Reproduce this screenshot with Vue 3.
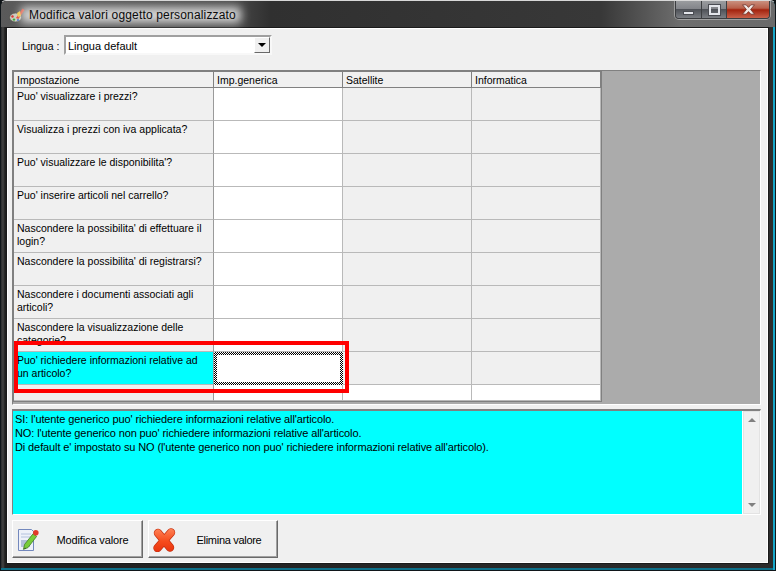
<script setup>
const columns = ['Impostazione', 'Imp.generica', 'Satellite', 'Informatica']
const rows = [
  "Puo' visualizzare i prezzi?",
  'Visualizza i prezzi con iva applicata?',
  "Puo' visualizzare le disponibilita'?",
  "Puo' inserire articoli nel carrello?",
  "Nascondere la possibilita' di effettuare il login?",
  "Nascondere la possibilita' di registrarsi?",
  'Nascondere i documenti associati agli articoli?',
  'Nascondere la visualizzazione delle categorie?',
  "Puo' richiedere informazioni relative ad un articolo?",
]
const notes = [
  "SI: l'utente generico puo' richiedere informazioni relative all'articolo.",
  "NO: l'utente generico non puo' richiedere informazioni relative all'articolo.",
  "Di default e' impostato su NO (l'utente generico non puo' richiedere informazioni relative all'articolo).",
]
</script>

<template>
  <div class="window">
    <header class="titlebar">
      <svg class="app-icon" width="17" height="16" viewBox="0 0 17 16">
        <ellipse cx="6.5" cy="10.5" rx="6" ry="4.5" fill="#c9c9bc" stroke="#4d4d48" stroke-width=".8" />
        <circle cx="3.5" cy="9.5" r="1.2" fill="#d33" />
        <circle cx="5" cy="12.6" r="1.2" fill="#3a3" />
        <circle cx="9" cy="13" r="1.1" fill="#36c" />
        <path d="M7 11 L13.5 1.5 L15.5 3 L9.5 12 Z" fill="#e23b22" />
        <path d="M8 6 L11 4 L12 9 L9 10 Z" fill="#f2c230" />
      </svg>
      <span class="title">Modifica valori oggetto personalizzato</span>
      <div class="caption-buttons">
        <span class="cap cap-min"><i></i></span>
        <span class="cap cap-max"><i></i></span>
        <span class="cap cap-close">
          <svg width="15" height="11" viewBox="0 0 15 11">
            <path d="M1.5 .8h3.6l2.4 2.6L9.9.8h3.6L9.6 5.5l3.9 4.7H9.9L7.5 7.6l-2.4 2.6H1.5l3.9-4.7z" fill="#f1e9e6" stroke="#6d3128" stroke-width=".8" />
          </svg>
        </span>
      </div>
    </header>

    <main class="client">
      <div class="lang-row">
        <label>Lingua :</label>
        <div class="combo">
          <span class="combo-text">Lingua default</span>
          <span class="combo-btn"><b></b></span>
        </div>
      </div>

      <section class="grid-panel">
        <div class="grid">
          <div class="row head">
            <div v-for="c in columns" :key="c" class="cell">{{ c }}</div>
          </div>
          <div v-for="(r, i) in rows" :key="r" class="row body" :class="{ active: i === 8 }">
            <div class="cell label"><span>{{ r }}</span></div>
            <div class="cell white" :class="{ focus: i === 8 }"></div>
            <div class="cell fixed"></div>
            <div class="cell fixed"></div>
          </div>
          <div class="row tail">
            <div class="cell tail-first"></div>
            <div class="cell white"></div>
            <div class="cell white"></div>
            <div class="cell white"></div>
          </div>
        </div>
        <div class="highlight"></div>
      </section>

      <section class="notes">
        <div class="notes-text">
          <p v-for="n in notes" :key="n">{{ n }}</p>
        </div>
        <div class="scrollbar">
          <i class="up"></i>
          <i class="down"></i>
        </div>
      </section>

      <footer class="actions">
        <button class="btn btn-edit">
          <svg width="24" height="24" viewBox="0 0 24 24">
            <path d="M2.5 1.5h13l2 2v19h-15z" fill="#eef1f9" stroke="#7388bd" />
            <path d="M5 12h9v7H5z" fill="#b4c0dc" />
            <path d="M5 6h10M5 9h10" stroke="#b4c2de" />
            <path d="M8.6 16.4l-1.2 5 4.6-1.8L20.6 8.4l-3.4-2.8z" fill="#78cc3a" stroke="#3f7d20" stroke-width=".8" />
            <path d="M9 19.5l-.8 1.6 1.8-.7z" fill="#333" />
            <circle cx="19.8" cy="4.8" r="2.8" fill="#e23a2a" />
          </svg>
          <span>Modifica valore</span>
        </button>
        <button class="btn btn-delete">
          <svg width="24" height="24" viewBox="0 0 24 24">
            <defs>
              <linearGradient id="xfill" gradientUnits="userSpaceOnUse" x1="0" y1="0" x2="0" y2="24">
                <stop offset="0" stop-color="#ff8458" />
                <stop offset=".55" stop-color="#f64c1c" />
                <stop offset="1" stop-color="#e8330e" />
              </linearGradient>
            </defs>
            <path d="M6 5 L18 19.5 M19 4.5 L5.5 20" stroke="#c42f10" stroke-width="8.4" stroke-linecap="round" fill="none" />
            <path d="M6 5 L18 19.5 M19 4.5 L5.5 20" stroke="url(#xfill)" stroke-width="7" stroke-linecap="round" fill="none" />
          </svg>
          <span>Elimina valore</span>
        </button>
      </footer>
    </main>
  </div>
</template>

<style>
html, body { margin: 0; background: #0d1215; }
</style>

<style scoped>
.window {
  width: 776px;
  height: 571px;
  box-sizing: border-box;
  padding: 0 6px 6px 5px;
  display: flex;
  flex-direction: column;
  overflow: hidden;
  font: 11px "Liberation Sans", Arial, sans-serif;
  color: #000;
  border: 1px solid #10161a;
  border-top-color: #d8d8d8;
  border-radius: 6px 6px 0 0;
  background: linear-gradient(90deg, #2a2b2d 0, #444 2px, #1f1f1f 4px, #2c2c2c 100%);
  box-shadow: inset -2px 0 0 #17a6c8, inset 0 -2px 0 #0d6f88;
}
.titlebar {
  height: 26px;
  flex: none;
  display: flex;
  align-items: center;
  position: relative;
  background: linear-gradient(90deg, #5a5a5a 0, #4a4a4a 230px, #303030 270px, #383838 600px, #6e6e6e 680px, #6a6a6a 100%);
  margin: 0 -6px 0 -5px;
  padding-left: 8px;
}
.app-icon { margin-right: 3px; flex: none; margin-top: 2px; }
.title {
  position: relative;
  isolation: isolate;
  font: 12px "Liberation Sans", Arial, sans-serif;
  letter-spacing: .16px;
  color: #0b0b0b;
  margin-top: 2px;
}
.title::before {
  content: "";
  position: absolute;
  inset: -1px -5px -1px -8px;
  background: rgba(232, 232, 232, .88);
  filter: blur(5px);
  z-index: -1;
}
.caption-buttons {
  position: absolute;
  top: 0;
  right: 5px;
  display: flex;
  height: 17px;
  border: 1px solid #3b3d40;
  border-top: 0;
  border-radius: 0 0 4px 4px;
  overflow: hidden;
  box-shadow: 0 0 0 1px rgba(255,255,255,.35);
}
.cap {
  height: 17px;
  display: flex;
  align-items: center;
  justify-content: center;
  box-sizing: border-box;
  background: linear-gradient(#9a9c9f 0, #83858a 45%, #4f5258 50%, #7b7e83 100%);
  border-right: 1px solid #3d3f42;
}
.cap-min { width: 26px; }
.cap-min i { width: 11px; height: 4px; margin-top: 6px; background: #e3e5ea; border: 1px solid #4a4c52; box-sizing: border-box; }
.cap-max { width: 25px; }
.cap-max i { width: 11px; height: 10px; border: 2px solid #e3e5ea; box-sizing: border-box; outline: 1px solid #4a4c52; }
.cap-close {
  width: 42px;
  border-right: 0;
  background: linear-gradient(#c9907f 0, #b8604a 42%, #a3230e 52%, #c8614a 100%);
}
.client {
  flex: 1;
  box-sizing: border-box;
  background: #f0f0f0;
  border: 1px solid #1a1a1a;
  box-shadow: inset 0 0 0 1px #fff;
  padding: 5px 7px 0 5px;
  display: flex;
  flex-direction: column;
}
.lang-row {
  display: flex;
  align-items: center;
  height: 24px;
  padding-left: 10px;
}
.lang-row label { font-size: 10.5px; width: 42px; flex: none; padding-top: 2px; }
.combo-text { padding-top: 1px; }
.combo {
  width: 208px;
  height: 20px;
  box-sizing: border-box;
  background: #fff;
  border: 2px solid;
  border-color: #a0a0a0 #f8f8f8 #f8f8f8 #a0a0a0;
  display: flex;
  align-items: center;
  justify-content: space-between;
  padding-left: 2px;
}
.combo-btn {
  width: 16px;
  height: 16px;
  box-sizing: border-box;
  background: #f0f0f0;
  border: 1px solid;
  border-color: #fff #696969 #696969 #fff;
  display: flex;
  align-items: center;
  justify-content: center;
}
.combo-btn b {
  border: 4px solid transparent;
  border-top-color: #000;
  border-bottom: 0;
}
.grid-panel {
  margin-top: 13px;
  height: 335px;
  flex: none;
  box-sizing: border-box;
  position: relative;
  background: #ababab;
  border: 1px solid;
  border-color: #808080 #fff #fff #808080;
}
.grid {
  width: 589px;
  height: 331px;
  box-sizing: border-box;
  border: 1px solid #808080;
  background: #fff;
  display: flex;
  flex-direction: column;
  font-size: 10.5px;
}
.row {
  display: grid;
  grid-template-columns: 200px 129px 129px 129px;
}
.cell {
  box-sizing: border-box;
  border-right: 1px solid #b9b9b9;
  border-bottom: 1px solid #b9b9b9;
  padding: 1px 3px 0;
  line-height: 14px;
  overflow: hidden;
  background: #f0f0f0;
}
.cell:first-child { border-right-color: #9a9a9a; }
.head { height: 16px; flex: none; }
.head .cell { border-bottom-color: #808080; border-right-color: #808080; }
.body { height: 33px; flex: none; }
.label { padding: 2px 3px 0; line-height: 13px; }
.white { background: #fff; }
.active .label { background: #0ff; }
.focus {
  position: relative;
  background: repeating-conic-gradient(#000 0 25%, #fff 0 50%) 0 0 / 2px 2px;
  border: 0;
}
.focus::after {
  content: "";
  position: absolute;
  inset: 3px;
  background: #fff;
}
.tail { flex: 1; }
.tail-first { background: #f0f0f0; }
.highlight {
  position: absolute;
  left: 1px;
  top: 270px;
  width: 335px;
  height: 52px;
  box-sizing: border-box;
  border: 4px solid #f00;
  pointer-events: none;
}
.notes {
  margin-top: 4px;
  height: 106px;
  flex: none;
  box-sizing: border-box;
  display: flex;
  border: 1px solid;
  border-color: #808080 #fff #fff #808080;
  border-top-width: 2px;
}
.notes-text {
  flex: 1;
  background: #0ff;
  padding: 1px 2px;
  line-height: 14px;
  letter-spacing: -.11px;
}
.notes-text p { margin: 0; }
.scrollbar {
  width: 18px;
  flex: none;
  background: #f0f0f0;
  border-left: 1px solid #fff;
  box-shadow: inset 0 0 0 1px #e3e3e3;
  display: flex;
  flex-direction: column;
  justify-content: space-between;
  align-items: center;
  padding: 7px 0;
  box-sizing: border-box;
}
.scrollbar i {
  border: 4px solid transparent;
}
.scrollbar .up { border-top: 0; border-bottom-color: #808080; }
.scrollbar .down { border-bottom: 0; border-top-color: #808080; }
.actions {
  display: flex;
  gap: 5px;
  margin-top: 5px;
}
.btn {
  height: 38px;
  box-sizing: border-box;
  width: 130px;
  background: #f0f0f0;
  border: 1px solid;
  border-color: #fff #696969 #696969 #fff;
  box-shadow: inset -1px -1px 0 #a0a0a0;
  display: flex;
  align-items: center;
  padding: 1px 4px 0 3px;
  font: 11px "Liberation Sans", Arial, sans-serif;
  letter-spacing: -.13px;
  color: #000;
}
.btn-edit { width: 131px; }
.btn svg { flex: none; }
.btn span { flex: 1; text-align: center; margin-left: 7px; }
.btn-delete span { letter-spacing: -.3px; margin-left: 9px; }
</style>
